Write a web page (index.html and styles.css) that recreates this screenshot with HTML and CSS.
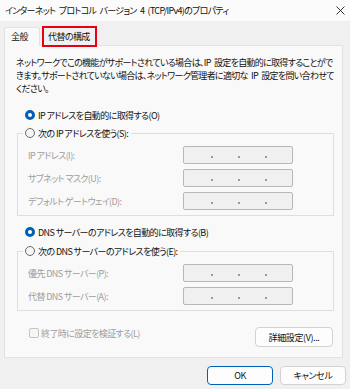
FILE: index.html
```html
<!DOCTYPE html>
<html lang="ja">
<head>
    <meta charset="UTF-8">
    <meta name="viewport" content="width=device-width, initial-scale=1.0">
    <title>インターネット プロトコル バージョン 4 (TCP/IPv4)のプロパティ</title>
    <link rel="stylesheet" href="styles.css">
</head>
<body>
    <div class="window">
        <div class="titlebar">
            <span class="title">インターネット プロトコル バージョン 4 (TCP/IPv4)のプロパティ</span>
            <svg class="close" width="9" height="9" viewBox="0 0 9 9">
                <path d="M0.5 0.5 L8.5 8.5 M8.5 0.5 L0.5 8.5" stroke="#333" stroke-width="1" fill="none"/>
            </svg>
        </div>

        <div class="tabs">
            <div class="tab active">全般</div>
            <div class="tab marked">代替の構成</div>
        </div>

        <div class="panel">
            <p class="intro">
                <span>ネットワークでこの機能がサポートされている場合は、IP 設定を自動的に取得することがで</span>
                <span>きます。サポートされていない場合は、ネットワーク管理者に適切な IP 設定を問い合わせて</span>
                <span>ください。</span>
            </p>

            <div class="radio-row"><span class="radio checked"></span>IP アドレスを自動的に取得する(O)</div>
            <fieldset class="group">
                <legend><span class="radio"></span>次の IP アドレスを使う(S):</legend>
                <div class="field-row">
                    <span class="field-label">IP アドレス(I):</span>
                    <div class="ip-box"><i></i><i></i><i></i></div>
                </div>
                <div class="field-row">
                    <span class="field-label">サブネット マスク(U):</span>
                    <div class="ip-box"><i></i><i></i><i></i></div>
                </div>
                <div class="field-row">
                    <span class="field-label">デフォルト ゲートウェイ(D):</span>
                    <div class="ip-box"><i></i><i></i><i></i></div>
                </div>
            </fieldset>

            <div class="radio-row dns"><span class="radio checked"></span>DNS サーバーのアドレスを自動的に取得する(B)</div>
            <fieldset class="group">
                <legend><span class="radio"></span>次の DNS サーバーのアドレスを使う(E):</legend>
                <div class="field-row">
                    <span class="field-label">優先 DNS サーバー(P):</span>
                    <div class="ip-box"><i></i><i></i><i></i></div>
                </div>
                <div class="field-row">
                    <span class="field-label">代替 DNS サーバー(A):</span>
                    <div class="ip-box"><i></i><i></i><i></i></div>
                </div>
            </fieldset>

            <div class="bottom-row">
                <div class="check"><span class="checkbox"></span>終了時に設定を検証する(L)</div>
                <button class="btn advanced">詳細設定(V)...</button>
            </div>
        </div>

        <div class="footer">
            <button class="btn primary">OK</button>
            <button class="btn">キャンセル</button>
        </div>
    </div>
</body>
</html>
```

FILE: styles.css
```css
* {
    margin: 0;
    padding: 0;
    box-sizing: border-box;
}

body {
    font-family: "Noto Sans CJK JP", "Noto Sans", sans-serif;
    font-feature-settings: "palt";
    font-size: 9px;
    letter-spacing: -0.6px;
    color: #111;
    background-color: #f0f0f0;
    width: 350px;
    height: 389px;
    overflow: hidden;
}

.title,
.intro span {
    letter-spacing: -0.7px;
    word-spacing: 2px;
}

.titlebar {
    height: 21px;
    background-color: #fbfbfb;
    display: flex;
    align-items: center;
    justify-content: space-between;
    padding: 0 5px 0 5px;
}

.close {
    margin-top: -1px;
}

.tabs {
    display: flex;
    align-items: flex-start;
    height: 18px;
    margin-top: 6px;
    padding-left: 4px;
}

.tab {
    position: relative;
    z-index: 2;
    line-height: 17px;
}

.tab.active {
    height: 19px;
    width: 36px;
    padding-left: 6px;
    background-color: #f9f9f9;
    border: 1px solid #e2e2e2;
    border-bottom: none;
    border-radius: 3px 3px 0 0;
}

.tab.marked {
    margin-left: 2px;
    margin-top: -1px;
    height: 21px;
    width: 55px;
    padding-left: 4px;
    line-height: 18px;
    border: 2px solid #e60012;
}

.panel {
    margin-left: 4px;
    width: 339px;
    height: 313px;
    background-color: #f9f9f9;
    border: 1px solid #e2e2e2;
    padding: 10px 9px 0 11px;
}

.intro span {
    display: block;
    white-space: nowrap;
    line-height: 13px;
}

.radio-row {
    display: flex;
    align-items: center;
    height: 14px;
    margin-top: 13px;
    padding-left: 9px;
}

.radio-row.dns {
    margin-top: 9px;
}

.radio {
    display: inline-block;
    width: 10px;
    height: 10px;
    border-radius: 50%;
    border: 1px solid #6b6b6b;
    background-color: #f5f5f5;
    margin-right: 3px;
    flex-shrink: 0;
}

.radio.checked {
    border: 3px solid #005fb8;
    background-color: #fff;
}

.group {
    margin: 4px 0 0 1px;
    width: 317px;
    border: 1px solid #dedede;
    padding: 6px 9px 5px 10px;
    display: grid;
    row-gap: 5px;
}

.radio-row.dns + .group {
    margin-top: 5px;
}

legend {
    display: flex;
    align-items: center;
    height: 14px;
    margin-left: -5px;
    padding: 0 3px 0 2px;
}

.field-row {
    display: grid;
    grid-template-columns: 155px 110px;
    align-items: center;
    height: 18px;
}

.field-label {
    color: #9d9d9d;
    white-space: nowrap;
}

.ip-box {
    height: 18px;
    background-color: #f0f0f0;
    border: 1px solid #b7b7b7;
    border-radius: 2px;
    display: flex;
    align-items: center;
    gap: 25px;
    padding: 3px 0 0 27px;
}

.ip-box i {
    width: 2px;
    height: 2px;
    background-color: #9a9a9a;
}

.bottom-row {
    display: flex;
    justify-content: space-between;
    align-items: flex-start;
    margin-top: 16px;
}

.check {
    display: flex;
    align-items: center;
    height: 12px;
    padding-left: 13px;
    color: #9d9d9d;
}

.checkbox {
    width: 10px;
    height: 10px;
    border: 1px solid #c4c4c4;
    border-radius: 2px;
    background-color: #f6f6f6;
    margin-right: 2px;
}

.btn {
    font-family: inherit;
    font-feature-settings: "palt";
    font-size: 9px;
    letter-spacing: -0.4px;
    color: #111;
    background-color: #fdfdfd;
    border: 1px solid #d2d2d2;
    border-radius: 4px;
    height: 19px;
    width: 66px;
}

.btn.advanced {
    width: 78px;
    height: 20px;
}

.btn.primary {
    border-color: #005fb8;
}

.footer {
    display: flex;
    justify-content: flex-end;
    gap: 7px;
    margin-top: 8px;
    padding-right: 4px;
}
```
